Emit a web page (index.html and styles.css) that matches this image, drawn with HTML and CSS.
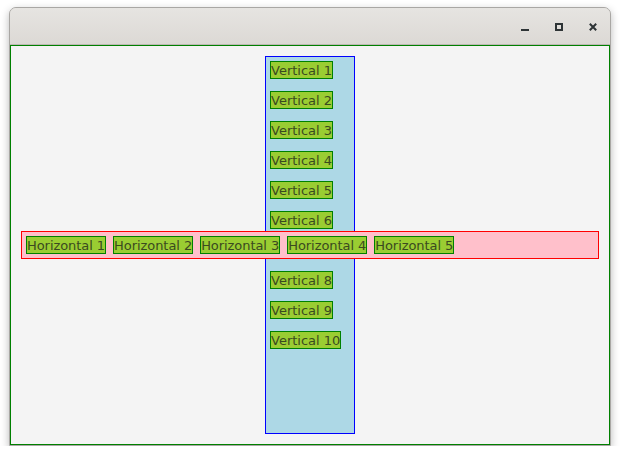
FILE: index.html
```html
<!DOCTYPE html>
<html>
<head>
<meta charset="utf-8">
<link rel="stylesheet" href="styles.css">
</head>
<body>
<div class="window">
  <div class="titlebar">
    <svg class="btn" width="8" height="8" viewBox="0 0 8 8"><rect x="0" y="6" width="8" height="2" fill="#2e3436"/></svg>
    <svg class="btn" width="8" height="8" viewBox="0 0 8 8"><rect x="1" y="1" width="6" height="6" fill="none" stroke="#2e3436" stroke-width="2"/></svg>
    <svg class="btn" width="8" height="8" viewBox="0 0 8 8"><path d="M0.8 0.8 L7.2 7.2 M7.2 0.8 L0.8 7.2" stroke="#2e3436" stroke-width="2"/></svg>
  </div>
  <div class="stage">
    <div class="vbox">
      <span class="lbl">Vertical 1</span>
      <span class="lbl">Vertical 2</span>
      <span class="lbl">Vertical 3</span>
      <span class="lbl">Vertical 4</span>
      <span class="lbl">Vertical 5</span>
      <span class="lbl">Vertical 6</span>
      <span class="lbl">Vertical 7</span>
      <span class="lbl">Vertical 8</span>
      <span class="lbl">Vertical 9</span>
      <span class="lbl">Vertical 10</span>
    </div>
    <div class="hbox">
      <span class="lbl">Horizontal 1</span>
      <span class="lbl">Horizontal 2</span>
      <span class="lbl">Horizontal 3</span>
      <span class="lbl">Horizontal 4</span>
      <span class="lbl">Horizontal 5</span>
    </div>
  </div>
</div>
</body>
</html>
```
FILE: styles.css
```css
html, body {
  margin: 0;
  padding: 0;
  background: #ffffff;
}
body {
  padding: 7px 0 0 9px;
  font-family: "DejaVu Sans", sans-serif;
}
.window {
  width: 602px;
  box-sizing: border-box;
  border: 1px solid #a9a7a4;
  border-radius: 7px 7px 0 0;
  box-shadow: 0 3px 9px rgba(0, 0, 0, 0.28);
  background: #dedbd7;
}
.titlebar {
  height: 37px;
  box-sizing: border-box;
  border-bottom: 1px solid #bdb9b4;
  border-radius: 6px 6px 0 0;
  background: linear-gradient(#e6e4e1, #dcd9d5);
  display: flex;
  justify-content: flex-end;
  align-items: center;
  gap: 26px;
  padding: 1px 13px 0 0;
}
.btn {
  display: block;
}
.stage {
  height: 400px;
  box-sizing: border-box;
  border: 1px solid #008000;
  background: #f4f4f4;
  padding: 10px;
  display: grid;
  grid-template: 1fr / 1fr;
}
.vbox, .hbox {
  grid-area: 1 / 1;
  box-sizing: border-box;
  padding: 4px;
}
.vbox {
  justify-self: center;
  width: 90px;
  background: #add8e6;
  border: 1px solid #0000ff;
  display: flex;
  flex-direction: column;
  align-items: flex-start;
  gap: 12px;
}
.hbox {
  align-self: center;
  height: 28px;
  background: #ffc0cb;
  border: 1px solid #ff0000;
  display: flex;
  align-items: flex-start;
  gap: 7px;
}
.lbl {
  display: block;
  height: 18px;
  box-sizing: border-box;
  border: 1px solid #008000;
  background: #9acd32;
  color: #3b4a20;
  font-size: 13px;
  line-height: 17px;
  padding: 0;
  white-space: nowrap;
}
.hbox .lbl {
  letter-spacing: -0.06px;
}
```
